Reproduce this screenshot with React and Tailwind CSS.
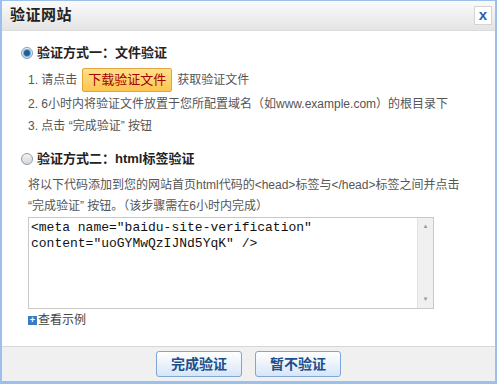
import React from "react";

const font = { fontFamily: '"Liberation Sans", "Noto Sans CJK SC", sans-serif' };

function Radio({ checked }) {
  return (
    <span className="inline-flex w-[12px] h-[12px] rounded-full border border-[#8a9bb0] bg-gradient-to-b from-[#f4f4f4] to-[#d6d6d6] items-center justify-center">
      {checked && <span className="w-[6px] h-[6px] rounded-full bg-[#1d5f9c] ring-1 ring-[#6fb0e6]" />}
    </span>
  );
}

export default function App() {
  return (
    <div className="w-[497px] h-[384px] bg-[#9cc0ec] px-[2px] pt-[1px] pb-[3px]" style={font}>
      <div className="w-full h-full flex flex-col bg-white">
        <div className="h-[30px] flex items-center justify-between pl-[8px] pr-[3px] bg-gradient-to-b from-[#fbfbfb] to-[#e4e4e4] border-b border-[#dcdcdc]">
          <span className="text-[15px] font-bold text-[#222] tracking-[0.5px]">验证网站</span>
          <span className="w-[18px] h-[19px] bg-white border border-[#d4d4d4] flex items-center justify-center text-[#2a5fb6] font-bold text-[15px] leading-none pb-[2px]">x</span>
        </div>
        <div className="flex-1 pl-[19px] pr-[10px] pt-[15px] text-[12px] text-[#555]">
          <div className="flex items-center gap-[4px] h-[14px]">
            <Radio checked />
            <span className="text-[13px] font-bold text-[#222]">验证方式一：文件验证</span>
          </div>
          <div className="pl-[7px] mt-[7px]">
            <div className="flex items-center h-[26px]">
              <span>1. 请点击</span>
              <span className="h-[24px] px-[5px] flex items-center rounded-[2px] border border-[#e2a53c] bg-gradient-to-b from-[#ffe08a] to-[#fcc54f] text-[#a60000] text-[13px] mx-[5px]">下载验证文件</span>
              <span>获取验证文件</span>
            </div>
            <div className="h-[22px] flex items-center">2. 6小时内将验证文件放置于您所配置域名（如www.example.com）的根目录下</div>
            <div className="h-[22px] flex items-center">3. 点击 “完成验证” 按钮</div>
          </div>
          <div className="flex items-center gap-[4px] h-[14px] mt-[15px]">
            <Radio />
            <span className="text-[13px] font-bold text-[#222]">验证方式二：html标签验证</span>
          </div>
          <div className="pl-[7px] mt-[9px]">
            <div className="leading-[21px]">将以下代码添加到您的网站首页html代码的&lt;head&gt;标签与&lt;/head&gt;标签之间并点击</div>
            <div className="leading-[21px]">“完成验证” 按钮。（该步骤需在6小时内完成）</div>
            <div className="w-[406px] h-[92px] border border-[#c8c8c8] flex bg-white">
              <div className="flex-1 px-[2px] pt-[2px] text-[13px] leading-[16px] text-[#111]" style={{ fontFamily: '"Liberation Mono", monospace' }}>
                {'<meta name="baidu-site-verification"'}<br />{'content="uoGYMwQzIJNd5YqK" />'}
              </div>
              <div className="w-[16px] bg-[#f0f0f0] border-l border-[#e2e2e2] flex flex-col justify-between items-center py-[4px] text-[6px] text-[#999]">
                <span>▲</span>
                <span>▼</span>
              </div>
            </div>
            <div className="flex items-center mt-[3px] h-[16px]">
              <span className="w-[9px] h-[9px] bg-[#3a7bc8] text-white text-[9px] font-bold leading-none flex items-center justify-center mr-[1px]">+</span>
              <span className="text-[12px] text-[#444]">查看示例</span>
            </div>
          </div>
        </div>
        <div className="h-[35px] bg-[#f0f0f0] border-t border-[#d6d6d6] flex items-center justify-center gap-[13px]">
          <span className="w-[86px] h-[26px] rounded-[3px] border border-[#7ea6d6] bg-gradient-to-b from-[#ffffff] to-[#d6e6f7] flex items-center justify-center text-[14px] font-bold text-[#1c4f8c]">完成验证</span>
          <span className="w-[86px] h-[26px] rounded-[3px] border border-[#7ea6d6] bg-gradient-to-b from-[#ffffff] to-[#d6e6f7] flex items-center justify-center text-[14px] font-bold text-[#1c4f8c]">暂不验证</span>
        </div>
      </div>
    </div>
  );
}
